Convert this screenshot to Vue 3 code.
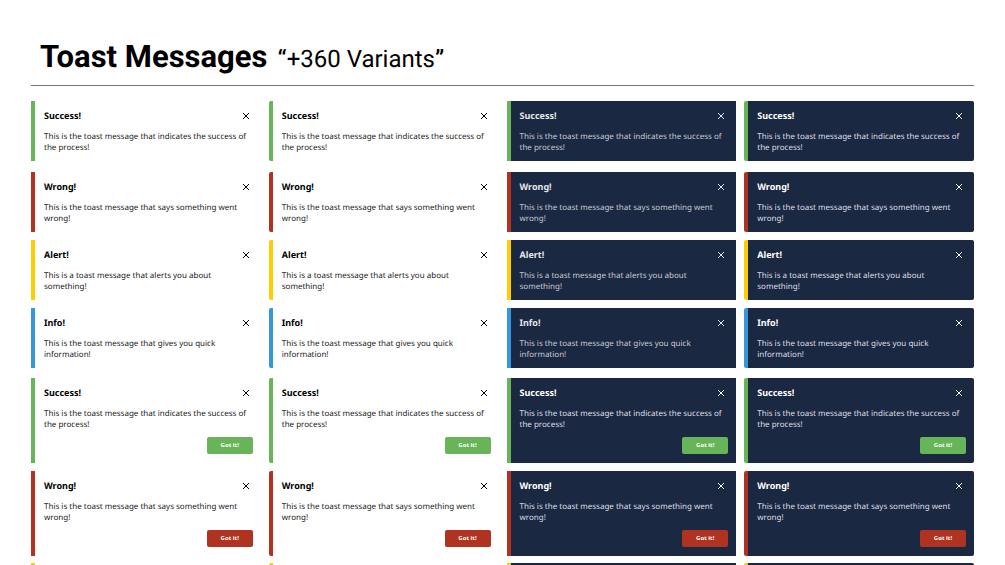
<script setup>
const success = { tone: 'success', title: 'Success!', text: 'This is the toast message that indicates the success of the process!' }
const wrong = { tone: 'wrong', title: 'Wrong!', text: 'This is the toast message that says something went wrong!' }
const alert = { tone: 'alert', title: 'Alert!', text: 'This is a toast message that alerts you about something!' }
const info = { tone: 'info', title: 'Info!', text: 'This is the toast message that gives you quick information!' }

const rows = [
  { ...success, space: 'wide' },
  { ...wrong },
  { ...alert },
  { ...info, space: 'section' },
  { ...success, action: true },
  { ...wrong, action: true, space: 'last' }
]

const variants = ['light square', 'light rounded', 'dark square', 'dark rounded']
</script>

<template>
  <main class="page">
    <header class="header">
      <h1>
        <span>Toast Messages</span>
        <span class="count"><b>“</b>+360 Variants<b>”</b></span>
      </h1>
    </header>
    <section v-for="(row, r) in rows" :key="r" class="row" :class="row.space">
      <article
        v-for="(variant, v) in variants"
        :key="variant"
        class="toast"
        :class="[variant, row.tone, { soft: v === 2 && !row.action, tall: row.action }]"
      >
        <div class="top">
          <h2>{{ row.title }}</h2>
          <button class="close" type="button" aria-label="Close">
            <svg viewBox="0 0 8 8" width="8" height="8" aria-hidden="true">
              <path d="M1 1L7 7M7 1L1 7" />
            </svg>
          </button>
        </div>
        <p>{{ row.text }}</p>
        <button v-if="row.action" class="action" type="button">Got it!</button>
      </article>
    </section>
    <section class="row">
      <article v-for="variant in variants" :key="variant" class="toast peek alert" :class="variant"></article>
    </section>
  </main>
</template>

<style>
html,
body {
  margin: 0;
  background: #fff;
}
</style>

<style scoped>
.page {
  box-sizing: border-box;
  height: 100vh;
  overflow: hidden;
  padding: 33px 31px 0;
  font-family: "Noto Sans", sans-serif;
  text-rendering: geometricPrecision;
  color: #000;
}
.header {
  border-bottom: 1px solid #777;
  padding: 0 9px 5px;
  margin-bottom: 15px;
}
h1 {
  display: flex;
  align-items: baseline;
  gap: 10px;
  margin: 0;
  font: 700 31px/47px Roboto, sans-serif;
}
.count {
  font-size: 24px;
  line-height: 24px;
  font-weight: 400;
}
.count b {
  font-weight: 500;
}
.row {
  display: grid;
  grid-template-columns: repeat(4, 1fr);
  gap: 8px;
  margin-bottom: 8px;
}
.row.wide {
  margin-bottom: 11px;
}
.row.section {
  margin-bottom: 10px;
}
.row.last {
  margin-bottom: 7px;
}
.toast {
  box-sizing: border-box;
  min-height: 60px;
  padding: 9px 8px 8px 9px;
  border-left: 4px solid var(--tone);
  display: flex;
  flex-direction: column;
}
.toast.tall {
  min-height: 85px;
}
.toast.peek {
  min-height: 2px;
  padding: 0;
  border-bottom-left-radius: 0;
  border-bottom-right-radius: 0;
}
.success { --tone: #67b558; }
.wrong { --tone: #b03220; }
.alert { --tone: #ffcc00; }
.info { --tone: #3498db; }
.rounded {
  border-radius: 2px;
}
.dark {
  background: #1b2842;
  color: #fff;
}
.dark p {
  color: #dcdfe4;
}
.soft {
  color: #e4e6ea;
}
.soft p {
  color: #c6cad1;
}
.top {
  display: flex;
  justify-content: space-between;
  align-items: center;
  padding-right: 3px;
}
h2 {
  margin: 0;
  font-size: 9px;
  line-height: 12px;
  font-weight: 700;
}
.close {
  display: flex;
  padding: 0;
  border: 0;
  background: none;
  color: inherit;
}
.close path {
  fill: none;
  stroke: currentColor;
  stroke-width: 1;
}
p {
  margin: 9px 0 0;
  font-size: 8px;
  line-height: 11px;
  color: #222;
}
.action {
  align-self: flex-end;
  width: 46px;
  height: 17px;
  margin-top: 7px;
  padding: 0;
  border: 0;
  border-radius: 2px;
  background: var(--tone);
  color: #fff;
  font: 700 6px/17px "Noto Sans", sans-serif;
}
</style>
